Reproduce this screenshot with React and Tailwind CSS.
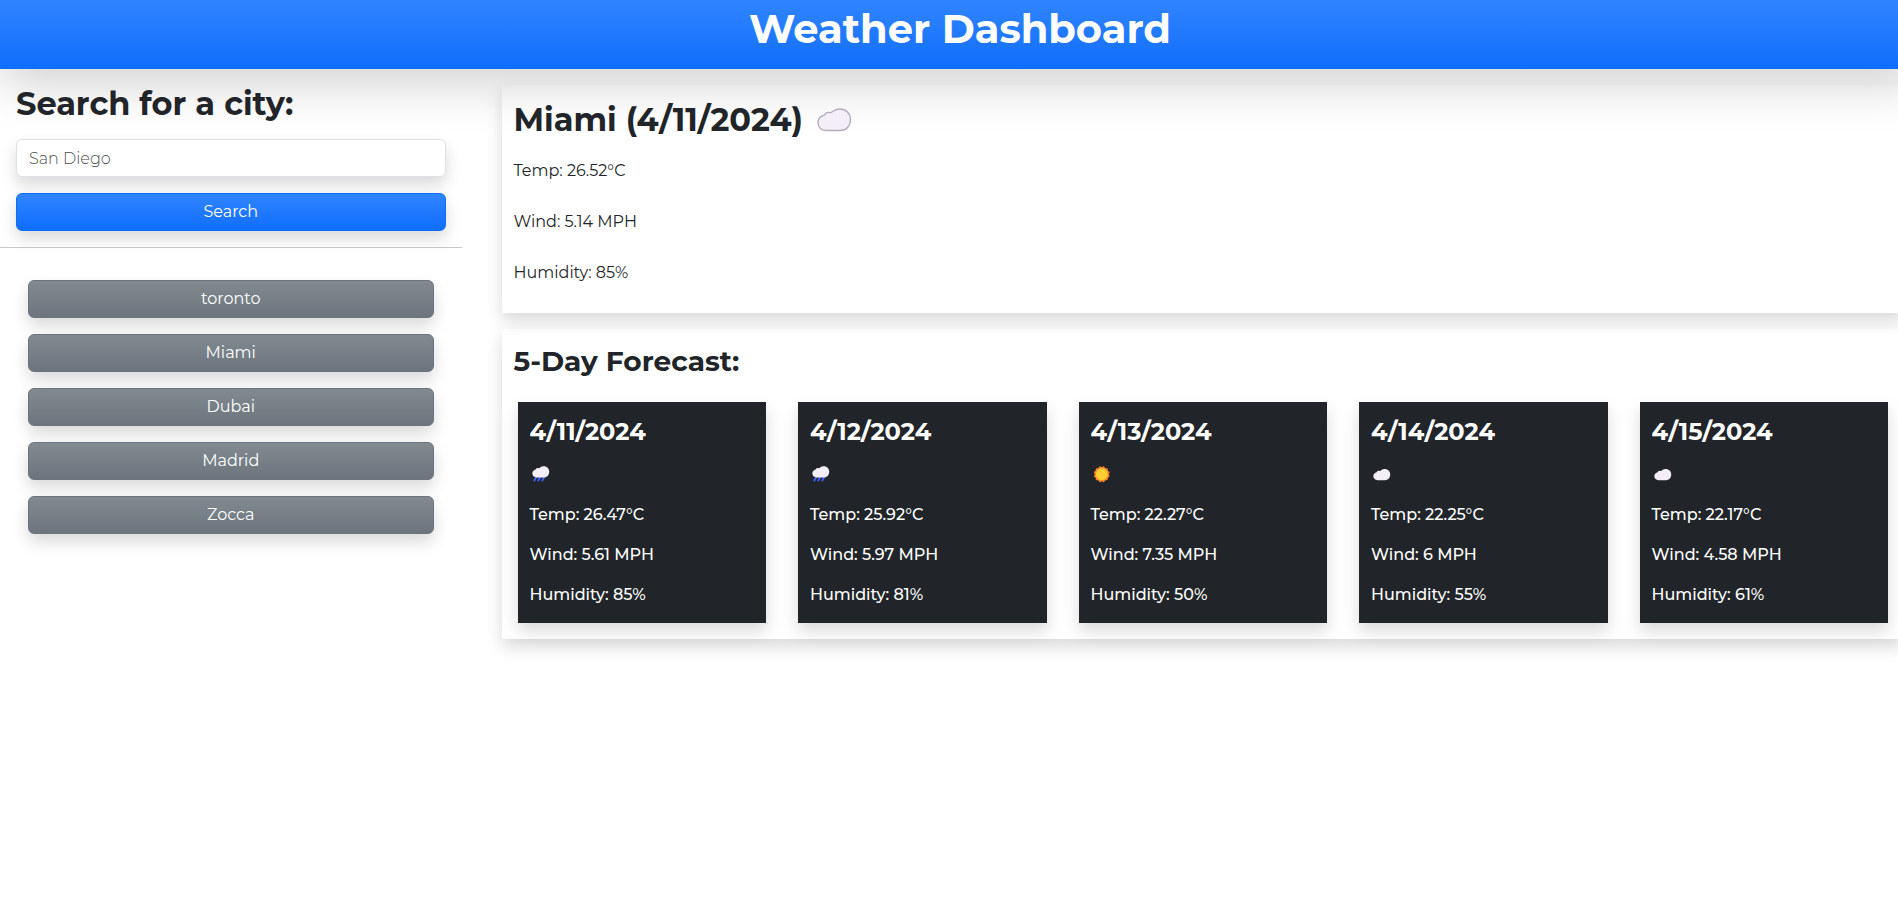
const recentCities = ["toronto", "Miami", "Dubai", "Madrid", "Zocca"];

const forecast = [
  { date: "4/11/2024", icon: "rain", temp: "26.47", wind: "5.61", humidity: 85 },
  { date: "4/12/2024", icon: "rain", temp: "25.92", wind: "5.97", humidity: 81 },
  { date: "4/13/2024", icon: "sun", temp: "22.27", wind: "7.35", humidity: 50 },
  { date: "4/14/2024", icon: "cloud", temp: "22.25", wind: "6", humidity: 55 },
  { date: "4/15/2024", icon: "cloud", temp: "22.17", wind: "4.58", humidity: 61 },
];

const cloudPath =
  "M9 22.500C4.600 22.500 1 19.400 1 15C1 11 3.600 8 7.500 7.200C8 5.200 10.500 4 12.800 4.600C14.600 4.800 15.200 4.200 16.500 3C18.300 1.600 20.500 1 23 1C29 1 33.500 5.500 33.500 11.500C33.500 18 29 22.500 23.500 22.500Z";

function CloudIcon() {
  return (
    <svg viewBox="0 0 35 24" className="h-6 w-[35px]" role="img" aria-label="Cloudy">
      <path d={cloudPath} fill="#f3eef8" stroke="#b4acbc" strokeWidth="1.3" />
    </svg>
  );
}

function WeatherIcon({ kind }) {
  if (kind === "sun") {
    return (
      <svg viewBox="0 0 20 20" className="size-5" role="img" aria-label="Sunny">
        <g fill="#ff822d">
          <rect x="4.750" y="4.250" width="12" height="12" rx="1" />
          <rect x="4.750" y="4.250" width="12" height="12" rx="1" transform="rotate(30 10.750 10.250)" />
          <rect x="4.750" y="4.250" width="12" height="12" rx="1" transform="rotate(60 10.750 10.250)" />
        </g>
        <circle cx="10.75" cy="10.25" r="5.9" fill="#ffce31" />
      </svg>
    );
  }
  return (
    <svg viewBox="0 0 20 20" className="size-5" role="img" aria-label={kind === "rain" ? "Rain" : "Cloudy"}>
      {kind === "rain" && (
        <path
          d="M6.300 13L4.300 16.500M10.300 13L8.300 16.500M14.300 13L12.300 16.500"
          stroke="#3f5fff"
          strokeWidth="2"
          strokeLinecap="round"
        />
      )}
      <path
        d={cloudPath}
        fill="#f3eef8"
        transform={kind === "rain" ? "translate(1.800 1.800) scale(.52)" : "translate(1.800 4.500) scale(.52)"}
      />
    </svg>
  );
}

export default function App() {
  return (
    <div className="min-h-screen overflow-hidden bg-white font-[Montserrat,Inter,sans-serif] text-base text-[#212529]">
      <header className="-mr-[22px] bg-linear-to-b from-[#2f84ff] to-[#0d6efd] pt-[5px] pb-4 text-center shadow-[0_16px_48px_rgba(0,0,0,0.175)]">
        <h1 className="text-[40px] leading-[48px] font-bold text-white">Weather Dashboard</h1>
      </header>

      <div className="flex pt-4">
        <aside className="w-1/4 pr-[13px]">
          <form className="px-4 pb-4" onSubmit={(e) => e.preventDefault()}>
            <label htmlFor="city" className="mb-4 block text-[32px] leading-[38px] font-bold">
              Search for a city:
            </label>
            <input
              id="city"
              type="text"
              placeholder="San Diego"
              className="mb-4 block h-[38px] w-full rounded-md border border-[#dee2e6] bg-white px-3 font-light shadow-[0_8px_16px_rgba(0,0,0,0.15)] placeholder:text-[#212529]/85"
            />
            <button
              type="submit"
              className="block h-[38px] w-full rounded-md border border-[#0d6efd] bg-linear-to-b from-[#2f84ff] to-[#0d6efd] text-white shadow-[0_8px_16px_rgba(0,0,0,0.15)]"
            >
              Search
            </button>
          </form>
          <hr className="border-[#c7c8c9]" />
          <div className="flex flex-col gap-4 px-7 pt-8">
            {recentCities.map((city) => (
              <button
                key={city}
                type="button"
                className="h-[38px] rounded-md border border-[#6c757d] bg-linear-to-b from-[#828a91] to-[#6c757d] text-white shadow-[0_8px_16px_rgba(0,0,0,0.15)]"
              >
                {city}
              </button>
            ))}
          </div>
        </aside>

        <main className="-mr-[6px] ml-[27px] flex min-w-0 flex-1 flex-col gap-4">
          <section className="px-3 pt-4 pb-7 shadow-[0_8px_16px_rgba(0,0,0,0.15)]">
            <div className="mb-5 flex items-center gap-[14px]">
              <h2 className="text-[32px] leading-[38px] font-bold">Miami (4/11/2024)</h2>
              <CloudIcon />
            </div>
            <div className="flex flex-col gap-[27px]">
              <p>Temp: 26.52°C</p>
              <p>Wind: 5.14 MPH</p>
              <p>Humidity: 85%</p>
            </div>
          </section>

          <section className="px-4 pt-4 pb-4 shadow-[0_8px_16px_rgba(0,0,0,0.15)]">
            <h3 className="-ml-1 mb-6 text-[28px] leading-[33px] font-bold">5-Day Forecast:</h3>
            <div className="grid grid-cols-5 gap-8">
              {forecast.map((day) => (
                <article
                  key={day.date}
                  className="bg-[#212529] px-3 pt-4 pb-4 font-medium text-white shadow-[0_8px_16px_rgba(0,0,0,0.15)]"
                >
                  <h4 className="mb-4 text-2xl leading-7 font-bold">{day.date}</h4>
                  <div className="mb-[17px] flex h-6 items-center">
                    <WeatherIcon kind={day.icon} />
                  </div>
                  <div className="flex flex-col gap-4">
                    <p>Temp: {day.temp}°C</p>
                    <p>Wind: {day.wind} MPH</p>
                    <p>Humidity: {day.humidity}%</p>
                  </div>
                </article>
              ))}
            </div>
          </section>
        </main>
      </div>
    </div>
  );
}
